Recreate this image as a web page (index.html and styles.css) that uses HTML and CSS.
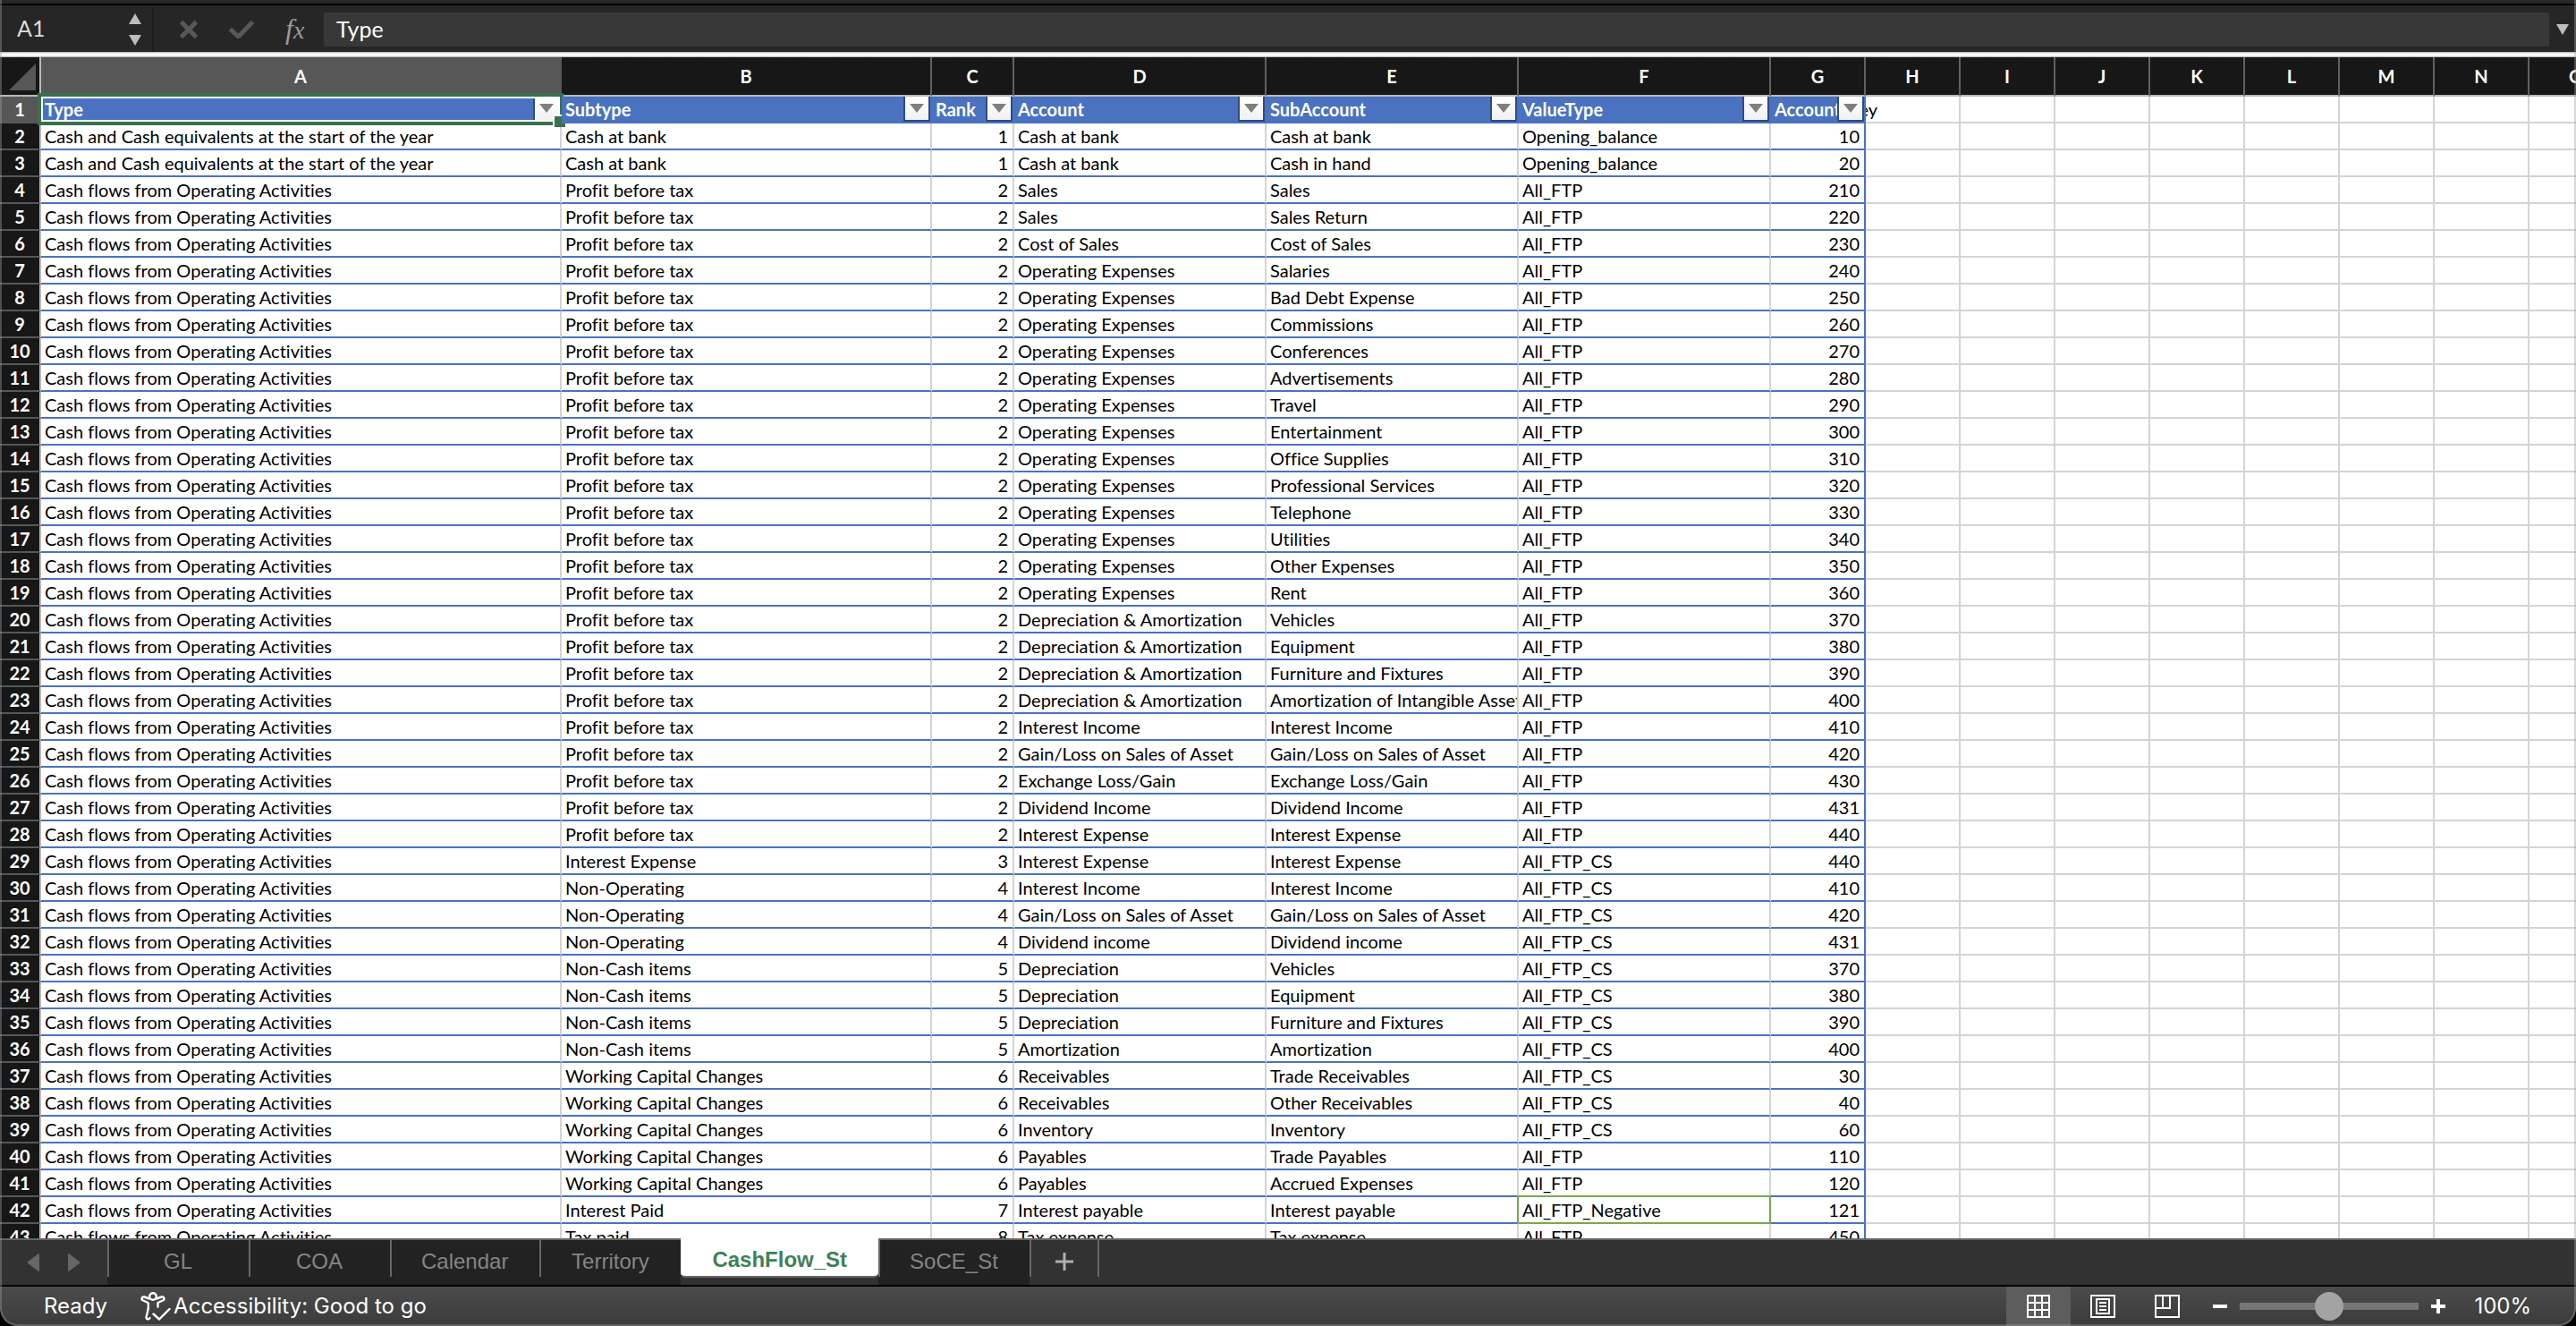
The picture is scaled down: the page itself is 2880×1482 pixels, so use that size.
FILE: index.html
```html
<!DOCTYPE html>
<html lang="en">
<head>
<meta charset="utf-8">
<title>CashFlow_St</title>
<link rel="stylesheet" href="styles.css">
</head>
<body>
<div class="window">
<header class="formula-bar">
  <div class="name-box">
    <input class="name-input" type="text" value="A1" aria-label="Name box">
    <button class="stepper" type="button" aria-label="Choose a named range">
      <svg width="14" height="36" viewBox="0 0 14 36"><path d="M7 0 14 12H0zM7 36 0 24h14z"/></svg>
    </button>
  </div>
  <div class="entry-tools">
    <button type="button" aria-label="Cancel"><svg width="20" height="20" viewBox="0 0 20 20"><path class="mark" d="M1.500 1.500 18.500 18.500M18.500 1.500 1.500 18.500"/></svg></button>
    <button type="button" aria-label="Enter"><svg width="28" height="20" viewBox="0 0 28 20"><path class="mark" d="M1.500 9.500 10.500 18 26.500 1.500"/></svg></button>
    <button class="fx" type="button" aria-label="Insert function"><i>f</i><i class="fx-x">x</i></button>
  </div>
  <input class="formula-input" type="text" value="Type" aria-label="Formula">
  <button class="expand" type="button" aria-label="Expand formula bar"><svg width="14" height="12" viewBox="0 0 14 12"><path d="M0 0h14L7 12z"/></svg></button>
</header>
<main class="sheet">
<table class="grid">
<colgroup><col class="c-num"><col class="c-a"><col class="c-b"><col class="c-c"><col class="c-d"><col class="c-d"><col class="c-d"><col class="c-std"><col class="c-std"><col class="c-std"><col class="c-std"><col class="c-std"><col class="c-std"><col class="c-std"><col class="c-std"><col class="c-std"></colgroup>
<thead>
<tr><td class="corner"><svg width="30" height="30" viewBox="0 0 30 30"><path d="M30 0V30H0z"/></svg><th class="picked">A<th>B<th>C<th>D<th>E<th>F<th>G<th>H<th>I<th>J<th>K<th>L<th>M<th>N<th>O</tr>
</thead>
<tbody>
<tr class="fields"><th class="picked">1
<td class="active-cell">Type<button class="filter" type="button" aria-label="Filter Type"></button><span class="outline"></span>
<td>Subtype<button class="filter" type="button" aria-label="Filter Subtype"></button>
<td>Rank<button class="filter" type="button" aria-label="Filter Rank"></button>
<td>Account<button class="filter" type="button" aria-label="Filter Account"></button>
<td>SubAccount<button class="filter" type="button" aria-label="Filter SubAccount"></button>
<td>ValueType<button class="filter" type="button" aria-label="Filter ValueType"></button>
<td>Account<button class="filter" type="button" aria-label="Filter AccountKey"></button>
<td class="spill"><span>Key</span><td><td><td><td><td><td><td></tr>
<tr><th>2<td>Cash and Cash equivalents at the start of the year<td>Cash at bank<td>1<td>Cash at bank<td>Cash at bank<td>Opening_balance<td>10<td><td><td><td><td><td><td><td></tr>
<tr><th>3<td>Cash and Cash equivalents at the start of the year<td>Cash at bank<td>1<td>Cash at bank<td>Cash in hand<td>Opening_balance<td>20<td><td><td><td><td><td><td><td></tr>
<tr><th>4<td>Cash flows from Operating Activities<td>Profit before tax<td>2<td>Sales<td>Sales<td>All_FTP<td>210<td><td><td><td><td><td><td><td></tr>
<tr><th>5<td>Cash flows from Operating Activities<td>Profit before tax<td>2<td>Sales<td>Sales Return<td>All_FTP<td>220<td><td><td><td><td><td><td><td></tr>
<tr><th>6<td>Cash flows from Operating Activities<td>Profit before tax<td>2<td>Cost of Sales<td>Cost of Sales<td>All_FTP<td>230<td><td><td><td><td><td><td><td></tr>
<tr><th>7<td>Cash flows from Operating Activities<td>Profit before tax<td>2<td>Operating Expenses<td>Salaries<td>All_FTP<td>240<td><td><td><td><td><td><td><td></tr>
<tr><th>8<td>Cash flows from Operating Activities<td>Profit before tax<td>2<td>Operating Expenses<td>Bad Debt Expense<td>All_FTP<td>250<td><td><td><td><td><td><td><td></tr>
<tr><th>9<td>Cash flows from Operating Activities<td>Profit before tax<td>2<td>Operating Expenses<td>Commissions<td>All_FTP<td>260<td><td><td><td><td><td><td><td></tr>
<tr><th>10<td>Cash flows from Operating Activities<td>Profit before tax<td>2<td>Operating Expenses<td>Conferences<td>All_FTP<td>270<td><td><td><td><td><td><td><td></tr>
<tr><th>11<td>Cash flows from Operating Activities<td>Profit before tax<td>2<td>Operating Expenses<td>Advertisements<td>All_FTP<td>280<td><td><td><td><td><td><td><td></tr>
<tr><th>12<td>Cash flows from Operating Activities<td>Profit before tax<td>2<td>Operating Expenses<td>Travel<td>All_FTP<td>290<td><td><td><td><td><td><td><td></tr>
<tr><th>13<td>Cash flows from Operating Activities<td>Profit before tax<td>2<td>Operating Expenses<td>Entertainment<td>All_FTP<td>300<td><td><td><td><td><td><td><td></tr>
<tr><th>14<td>Cash flows from Operating Activities<td>Profit before tax<td>2<td>Operating Expenses<td>Office Supplies<td>All_FTP<td>310<td><td><td><td><td><td><td><td></tr>
<tr><th>15<td>Cash flows from Operating Activities<td>Profit before tax<td>2<td>Operating Expenses<td>Professional Services<td>All_FTP<td>320<td><td><td><td><td><td><td><td></tr>
<tr><th>16<td>Cash flows from Operating Activities<td>Profit before tax<td>2<td>Operating Expenses<td>Telephone<td>All_FTP<td>330<td><td><td><td><td><td><td><td></tr>
<tr><th>17<td>Cash flows from Operating Activities<td>Profit before tax<td>2<td>Operating Expenses<td>Utilities<td>All_FTP<td>340<td><td><td><td><td><td><td><td></tr>
<tr><th>18<td>Cash flows from Operating Activities<td>Profit before tax<td>2<td>Operating Expenses<td>Other Expenses<td>All_FTP<td>350<td><td><td><td><td><td><td><td></tr>
<tr><th>19<td>Cash flows from Operating Activities<td>Profit before tax<td>2<td>Operating Expenses<td>Rent<td>All_FTP<td>360<td><td><td><td><td><td><td><td></tr>
<tr><th>20<td>Cash flows from Operating Activities<td>Profit before tax<td>2<td>Depreciation &amp; Amortization<td>Vehicles<td>All_FTP<td>370<td><td><td><td><td><td><td><td></tr>
<tr><th>21<td>Cash flows from Operating Activities<td>Profit before tax<td>2<td>Depreciation &amp; Amortization<td>Equipment<td>All_FTP<td>380<td><td><td><td><td><td><td><td></tr>
<tr><th>22<td>Cash flows from Operating Activities<td>Profit before tax<td>2<td>Depreciation &amp; Amortization<td>Furniture and Fixtures<td>All_FTP<td>390<td><td><td><td><td><td><td><td></tr>
<tr><th>23<td>Cash flows from Operating Activities<td>Profit before tax<td>2<td>Depreciation &amp; Amortization<td>Amortization of Intangible Assets<td>All_FTP<td>400<td><td><td><td><td><td><td><td></tr>
<tr><th>24<td>Cash flows from Operating Activities<td>Profit before tax<td>2<td>Interest Income<td>Interest Income<td>All_FTP<td>410<td><td><td><td><td><td><td><td></tr>
<tr><th>25<td>Cash flows from Operating Activities<td>Profit before tax<td>2<td>Gain/Loss on Sales of Asset<td>Gain/Loss on Sales of Asset<td>All_FTP<td>420<td><td><td><td><td><td><td><td></tr>
<tr><th>26<td>Cash flows from Operating Activities<td>Profit before tax<td>2<td>Exchange Loss/Gain<td>Exchange Loss/Gain<td>All_FTP<td>430<td><td><td><td><td><td><td><td></tr>
<tr><th>27<td>Cash flows from Operating Activities<td>Profit before tax<td>2<td>Dividend Income<td>Dividend Income<td>All_FTP<td>431<td><td><td><td><td><td><td><td></tr>
<tr><th>28<td>Cash flows from Operating Activities<td>Profit before tax<td>2<td>Interest Expense<td>Interest Expense<td>All_FTP<td>440<td><td><td><td><td><td><td><td></tr>
<tr><th>29<td>Cash flows from Operating Activities<td>Interest Expense<td>3<td>Interest Expense<td>Interest Expense<td>All_FTP_CS<td>440<td><td><td><td><td><td><td><td></tr>
<tr><th>30<td>Cash flows from Operating Activities<td>Non-Operating<td>4<td>Interest Income<td>Interest Income<td>All_FTP_CS<td>410<td><td><td><td><td><td><td><td></tr>
<tr><th>31<td>Cash flows from Operating Activities<td>Non-Operating<td>4<td>Gain/Loss on Sales of Asset<td>Gain/Loss on Sales of Asset<td>All_FTP_CS<td>420<td><td><td><td><td><td><td><td></tr>
<tr><th>32<td>Cash flows from Operating Activities<td>Non-Operating<td>4<td>Dividend income<td>Dividend income<td>All_FTP_CS<td>431<td><td><td><td><td><td><td><td></tr>
<tr><th>33<td>Cash flows from Operating Activities<td>Non-Cash items<td>5<td>Depreciation<td>Vehicles<td>All_FTP_CS<td>370<td><td><td><td><td><td><td><td></tr>
<tr><th>34<td>Cash flows from Operating Activities<td>Non-Cash items<td>5<td>Depreciation<td>Equipment<td>All_FTP_CS<td>380<td><td><td><td><td><td><td><td></tr>
<tr><th>35<td>Cash flows from Operating Activities<td>Non-Cash items<td>5<td>Depreciation<td>Furniture and Fixtures<td>All_FTP_CS<td>390<td><td><td><td><td><td><td><td></tr>
<tr><th>36<td>Cash flows from Operating Activities<td>Non-Cash items<td>5<td>Amortization<td>Amortization<td>All_FTP_CS<td>400<td><td><td><td><td><td><td><td></tr>
<tr><th>37<td>Cash flows from Operating Activities<td>Working Capital Changes<td>6<td>Receivables<td>Trade Receivables<td>All_FTP_CS<td>30<td><td><td><td><td><td><td><td></tr>
<tr><th>38<td>Cash flows from Operating Activities<td>Working Capital Changes<td>6<td>Receivables<td>Other Receivables<td>All_FTP_CS<td>40<td><td><td><td><td><td><td><td></tr>
<tr><th>39<td>Cash flows from Operating Activities<td>Working Capital Changes<td>6<td>Inventory<td>Inventory<td>All_FTP_CS<td>60<td><td><td><td><td><td><td><td></tr>
<tr><th>40<td>Cash flows from Operating Activities<td>Working Capital Changes<td>6<td>Payables<td>Trade Payables<td>All_FTP<td>110<td><td><td><td><td><td><td><td></tr>
<tr><th>41<td>Cash flows from Operating Activities<td>Working Capital Changes<td>6<td>Payables<td>Accrued Expenses<td>All_FTP<td>120<td><td><td><td><td><td><td><td></tr>
<tr><th>42<td>Cash flows from Operating Activities<td>Interest Paid<td>7<td>Interest payable<td>Interest payable<td class="boxed">All_FTP_Negative<td>121<td><td><td><td><td><td><td><td></tr>
<tr><th>43<td>Cash flows from Operating Activities<td>Tax paid<td>8<td>Tax expense<td>Tax expense<td>All_FTP<td>450<td><td><td><td><td><td><td><td></tr>
</tbody>
</table>
</main>
<nav class="tabs" aria-label="Sheets">
  <div class="tab-scroll">
    <button type="button" aria-label="Previous sheet"><svg width="14" height="20" viewBox="0 0 14 20"><path d="M14 1v18q0 1-1 1L0 10 13 0q1 0 1 1z"/></svg></button>
    <button type="button" aria-label="Next sheet"><svg width="14" height="20" viewBox="0 0 14 20"><path d="M0 1v18q0 1 1 1L14 10 1 0Q0 0 0 1z"/></svg></button>
  </div>
  <button class="tab" type="button">GL</button>
  <button class="tab" type="button">COA</button>
  <button class="tab" type="button">Calendar</button>
  <button class="tab" type="button">Territory</button>
  <button class="tab current" type="button" aria-current="page">CashFlow_St</button>
  <button class="tab" type="button">SoCE_St</button>
  <button class="add-tab" type="button" aria-label="Add sheet"><svg width="20" height="20" viewBox="0 0 20 20"><path d="M8.500 0h3v8.500H20v3h-8.500V20h-3v-8.500H0v-3h8.500z"/></svg></button>
</nav>
<footer class="status">
  <span class="ready">Ready</span>
  <button class="a11y" type="button">
    <svg width="34" height="32" viewBox="0 0 34 32"><circle cx="14" cy="5" r="3.800"/><path d="M10 7.500 4.500 5.500C1.500 4.500 0.500 8.500 3 9.500L8.500 12C9.500 16 9 19 7.500 24L6.500 28C6.500 31 9.500 31 10.500 29M18 7.500 23.500 5.500C26.500 4.500 27.500 8.500 25 9.500L19.500 12V16.500M14.500 24.500 21 30.500 32.500 19"/></svg>
    <span>Accessibility: Good to go</span>
  </button>
  <div class="views">
    <button class="on" type="button" aria-label="Normal view"><svg width="26" height="26" viewBox="0 0 26 26"><path d="M1 1h24v24H1zM9 1v24M17 1v24M1 9h24M1 17h24"/></svg></button>
    <button type="button" aria-label="Page layout"><svg width="28" height="26" viewBox="0 0 28 26"><path d="M1 1h26v24H1zM7 5h14v16H7zM10 9h8M10 13h8M10 17h8"/></svg></button>
    <button type="button" aria-label="Page break preview"><svg width="28" height="26" viewBox="0 0 28 26"><path d="M1 1h26v24H1zM1 15h16V1M9 1v14"/></svg></button>
  </div>
  <div class="zoom">
    <button type="button" aria-label="Zoom out"><svg width="16" height="16" viewBox="0 0 16 16"><path d="M0 6h16v4H0z"/></svg></button>
    <input type="range" min="0" max="100" value="50" aria-label="Zoom">
    <button type="button" aria-label="Zoom in"><svg width="16" height="16" viewBox="0 0 16 16"><path d="M6 0h4v6h6v4h-6v6H6v-6H0V6h6z"/></svg></button>
    <output>100%</output>
  </div>
</footer>
</div>
</body>
</html>
```
FILE: styles.css
```css
* { box-sizing: border-box; }
body { margin: 0; background: #000; }
button, input { margin: 0; padding: 0; border: 0; background: none; color: inherit; font: inherit; }
button { display: flex; align-items: center; justify-content: center; }
svg { display: block; flex: none; }

.window { position: relative; display: flex; flex-direction: column; height: 100vh; overflow: hidden; border-radius: 0 0 20px 20px; background: #262626; }
.window::after { content: ""; position: absolute; inset: 0; border: 2px solid rgba(160, 160, 160, .4); border-top: 0; border-radius: 0 0 20px 20px; pointer-events: none; }

/* Formula bar */
.formula-bar { flex: none; display: flex; align-items: center; height: 64px; padding-top: 2px; background: linear-gradient(#262626 4px, #000 4px 6px, #262626 6px 58px, #a8a8a8 58px, #fff 60px 62px, #a8a8a8 64px); color: #fff; font-family: Lato, sans-serif; font-size: 25px; }
.name-box { display: flex; align-items: center; width: 172px; height: 50px; padding: 0 12px 0 19px; border-right: 2px solid #1e1e1e; color: #dcdcdc; }
.name-input { flex: 1; min-width: 0; padding-bottom: 4px; }
.stepper { fill: #bdbdbd; }
.entry-tools { display: flex; align-items: center; width: 190px; padding-left: 29px; gap: 35px; }
.mark { fill: none; stroke: #585858; stroke-width: 5; }
.fx { color: #9a9a9a; font: 32px/36px "Liberation Serif", serif; align-items: baseline; }
.fx-x { font-size: 28px; }
.formula-input { flex: 1; min-width: 0; height: 38px; padding: 0 0 2px 14px; background: #383838; }
.expand { width: 30px; fill: #bdbdbd; }

/* Sheet */
.sheet { flex: 1; min-height: 0; overflow: hidden; background: #fff; }
.grid { width: 2934px; table-layout: fixed; border-spacing: 0; font: 20px/28px Lato, sans-serif; font-variant-ligatures: none; color: #000; }
.c-num { width: 46px; }
.c-a { width: 582px; }
.c-b { width: 414px; }
.c-c { width: 92px; }
.c-d { width: 282px; }
.c-std { width: 106px; }
.grid td, .grid th { padding: 0 0 0 4px; height: 30px; overflow: hidden; white-space: nowrap; text-align: left; border: solid #d4d4d4; border-width: 0 2px 2px 0; }
.grid thead th, .grid thead td { height: 44px; padding: 0; text-align: center; color: #fff; background: #171717; border-color: #616161; border-bottom-color: #b9b9b9; }
.grid thead .picked { background: #575757; border-right-color: #575757; }
.grid .corner { padding: 2px 0 0 10px; border-right-color: #b9b9b9; }
.corner svg { fill: #575757; }
.grid tbody th { padding: 0; text-align: center; color: #fff; background: #171717; border-color: #575757; border-right-color: #b9b9b9; }
.grid tbody .picked { background: #575757; }
.grid td:nth-child(-n+8) { border-bottom-color: #4a72c0; }
.grid td:nth-child(8) { border-right-color: #4a72c0; }
.grid thead td.corner { padding: 2px 0 0 10px; border-right-color: #b9b9b9; border-bottom-color: #b9b9b9; }
.grid tbody tr:not(.fields) td:nth-child(4), .grid tbody tr:not(.fields) td:nth-child(8) { padding-right: 5px; text-align: right; }
.grid td.boxed { border-color: #78a94f; box-shadow: -2px -2px #78a94f, 0 -2px #78a94f, -2px 0 #78a94f; position: relative; }

.fields td:nth-child(-n+8) { position: relative; background: #4a72c0; color: #fff; font-weight: bold; border-right-color: #4a72c0; }
.filter { position: absolute; top: 0; right: 0; width: 30px; height: 28px; border: solid #2f4a86; border-width: 0 2px 2px; background: linear-gradient(#fff, #f1f1f1); border-radius: 0 0 2px 2px; }
.filter::before { content: ""; border: solid transparent; border-width: 10px 8px 0; border-top-color: #7f7f7f; }
.grid td.active-cell { overflow: visible; }
.outline { position: absolute; inset: -4px; border: 4px solid #39714a; box-shadow: inset 0 0 0 2px #fff; }
.outline::after { content: ""; position: absolute; right: -6px; bottom: -6px; width: 12px; height: 12px; background: #39714a; border: solid #fff; border-width: 2px 0 0 2px; }
.grid .spill { padding: 0; }
.spill span { display: flex; justify-content: flex-end; width: 13px; overflow: hidden; }

/* Sheet tabs */
.tabs { flex: none; display: flex; height: 54px; border-top: 2px solid #666; border-bottom: 2px solid #000; background: #323232; color: #858585; font: 24px/41px "Liberation Sans", Arial, sans-serif; }
.tab-scroll { display: flex; align-items: center; justify-content: center; gap: 32px; width: 120px; fill: #666; }
.tab { min-width: 158px; height: 50px; padding: 0 35px 3px; background: linear-gradient(#666, #666) 0 0 / 2px 41px no-repeat #222; }
.tab.current { height: 44px; margin-top: -2px; padding: 5px 35px 0; border-bottom: 2px solid #666; border-radius: 0 0 5px 5px; background: #fff; color: #3f8155; font-weight: bold; }
.add-tab { width: 78px; height: 41px; padding-top: 7px; border: solid #666; border-width: 0 2px; fill: #b0b0b0; }

/* Status bar */
.status { flex: none; display: flex; align-items: center; height: 44px; padding: 0 50px 0 49px; background: linear-gradient(#4b4b4b, #3b3b3b); color: #fff; font: 24px/42px Inter, sans-serif; }
.a11y { gap: 3px; margin-left: 37px; }
.a11y svg { fill: none; stroke: #fff; stroke-width: 2.400; stroke-linecap: round; stroke-linejoin: round; }
.views { display: flex; align-self: stretch; margin-left: auto; }
.views button { width: 72px; }
.views .on { background: #5d5d5d; }
.views svg { fill: none; stroke: #fff; stroke-width: 2; }
.zoom { display: flex; align-items: center; gap: 14px; margin-left: 15px; fill: #fff; }
.zoom input { appearance: none; width: 200px; height: 32px; background: linear-gradient(#767676, #767676) center / 100% 8px no-repeat; border-radius: 4px; }
.zoom input::-webkit-slider-thumb { appearance: none; width: 32px; height: 32px; border-radius: 50%; background: #a3a3a3; }
.zoom output { margin-left: 18px; }
```
